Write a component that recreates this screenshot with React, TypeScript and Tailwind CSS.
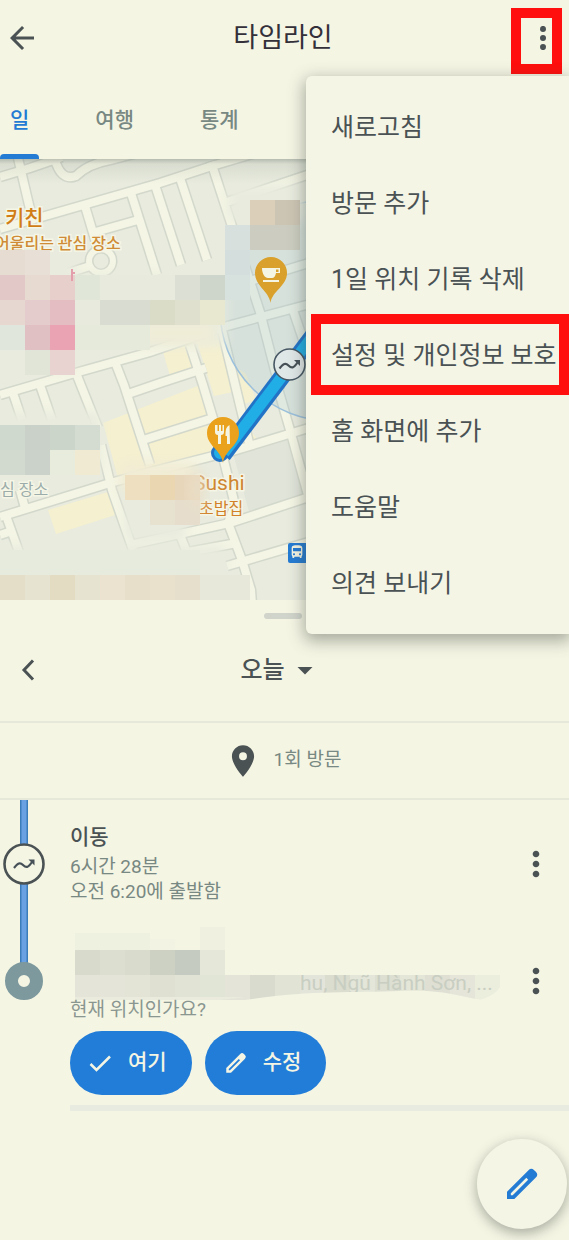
import { MdArrowBack, MdArrowDropDown, MdDirectionsBus, MdLocationOn, MdMoreVert } from "react-icons/md";

const tabs = ["일", "여행", "통계"];

const menuItems = [
  "새로고침",
  "방문 추가",
  "1일 위치 기록 삭제",
  "설정 및 개인정보 보호",
  "홈 화면에 추가",
  "도움말",
  "의견 보내기",
];

const roads = [
  "M0 229L160 183L212 166L306 138",
  "M0 177L30 168L62 157",
  "M18 158L33 222",
  "M54 156Q60 182 76 176Q88 164 110 160L165 146",
  "M130 190L157 275",
  "M92 233L138 220",
  "M85 206L97 246",
  "M90 266L68 273",
  "M0 395L75 373L150 352L220 328L257 318L310 304",
  "M76 373L98 428",
  "M115 362L124 385L150 465",
  "M13 393L22 420",
  "M40 385L52 420",
  "M128 394L160 383L206 368",
  "M143 440L213 418",
  "M0 517L110 483L150 472L233 451L312 427",
  "M101 445L112 490L133 550",
  "M5 513L19 552",
  "M0 535L12 531",
  "M20 490L25 508",
  "M190 345L203 385L215 425L235 505L228 523L242 560L251 590L252 604",
  "M222 330L250 447",
  "M277 385L290 430L308 495",
  "M130 545L230 523L312 496",
  "M188 552L237 543",
  "M227 566L312 541",
  "M155 185L181 265",
  "M180 178L207 260",
  "M211 162L260 312L280 390",
  "M227 202L310 174",
  "M227 288L312 262",
  "M293 310L310 360",
  "M180 535L190 560",
];

const yellowAreas = [
  "163,352 188,343 196,368 170,376",
  "197,342 217,335 233,392 214,396",
  "233,365 246,374 256,400 244,404",
  "103,423 200,385 215,420 250,430 262,445 215,457 118,478",
  "48,510 108,492 115,515 56,534",
];

// x, y, columns, colour
const mapMosaic: [number, number, number, string][] = [
  [0, 250, 1, "#e6dcd2"], [25, 250, 1, "#e8e0d6"],
  [0, 275, 1, "#e3c8c8"], [25, 275, 1, "#e7dad1"], [50, 275, 1, "#e7cfcc"], [75, 275, 1, "#e0e7d8"],
  [100, 275, 3, "#e7eadc"], [175, 275, 1, "#dce0d4"], [200, 275, 1, "#ced6cc"], [225, 275, 1, "#d7e1de"],
  [0, 300, 1, "#e6d8d0"], [25, 300, 1, "#e5cccc"], [50, 300, 1, "#e4bdc3"], [75, 300, 1, "#e7eadc"],
  [100, 300, 2, "#d8dcd1"], [150, 300, 1, "#dbdcc8"], [175, 300, 1, "#dfe0cd"], [200, 300, 1, "#e8e8d0"],
  [0, 325, 1, "#e1e6dc"], [25, 325, 1, "#e1c0c4"], [50, 325, 1, "#eaa3b3"], [75, 325, 3, "#e6eadb"],
  [25, 350, 1, "#e0e5d7"], [50, 350, 1, "#e8d3d0"],
  [250, 200, 1, "#dccfba"], [275, 200, 1, "#cdc5b4"],
  [225, 225, 1, "#d7e0dc"], [250, 225, 2, "#cccdc0"],
  [225, 250, 1, "#d3dedd"],
  [0, 425, 1, "#d0d9cd"], [25, 425, 1, "#c9d1c8"], [50, 425, 1, "#ccd5ca"], [75, 425, 1, "#d4dbd0"],
  [0, 450, 1, "#d2d9cf"], [25, 450, 1, "#cbd2ca"], [50, 450, 1, "#e8ecdc"], [75, 450, 1, "#f0ead2"],
  [125, 475, 1, "#eedfc0"], [150, 475, 1, "#ead6b0"], [175, 475, 1, "#e8d6ba"],
  [150, 500, 1, "#e6e2cf"], [175, 500, 1, "#e6ddcc"],
  [0, 550, 8, "#e7ebdd"],
  [0, 575, 1, "#e4ddc7"], [25, 575, 1, "#e6e3d0"], [50, 575, 1, "#e4dbc3"], [75, 575, 1, "#e6e3d1"],
  [100, 575, 1, "#ebe3d0"], [125, 575, 1, "#e8dfca"], [150, 575, 1, "#e9e1cb"], [175, 575, 1, "#e6dfcc"],
  [200, 575, 2, "#e7e8da"],
];

const nameMosaic: [number, number, number, string][] = [
  [5, 6, 3, "#eff1e0"], [130, 0, 1, "#eff0e0"], [80, 12, 1, "#f2f3e3"],
  [5, 23, 1, "#d8dbcc"], [30, 23, 1, "#dcdfcf"], [55, 23, 1, "#d9dccc"], [80, 23, 1, "#cdd1c4"],
  [105, 23, 1, "#c5cbc0"], [130, 23, 1, "#e5e8d9"],
  [5, 48, 2, "#e4e5d8"], [55, 48, 1, "#e3e3d6"], [80, 48, 1, "#dfe0d1"], [105, 48, 1, "#e1e3d4"],
  [130, 48, 1, "#e0e5d6"], [155, 48, 1, "#e4e5d8"], [180, 48, 1, "#d8dbce"], [205, 48, 1, "#e1e4d5"],
  [230, 48, 1, "#e4e5da"], [255, 48, 1, "#dbddcf"], [280, 48, 1, "#e3e6d8"], [305, 48, 1, "#dcdfd1"],
  [330, 48, 1, "#e4e6d7"], [355, 48, 1, "#dfe0d3"], [380, 48, 1, "#e5e5d9"], [405, 48, 1, "#ebeddd"],
];

const TravelArrow = () => (
  <>
    <path d="M-10 4C-6 -1 -4 -2 -1 1S4 4 8 -2" fill="none" stroke="#465057" strokeWidth="2.2" />
    <path d="M4.500 -4.500H10.500V1.500Z" fill="#465057" />
  </>
);

const Pencil = ({ className }: { className: string }) => (
  <svg viewBox="0 0 24 24" className={className} aria-hidden="true">
    <path
      fill="currentColor"
      fillRule="evenodd"
      d="M3 16.600V21h4.400L20.300 8.100a2.400 2.400 0 0 0 0-3.400l-1-1a2.400 2.400 0 0 0-3.400 0L3 16.600zM5.300 18.700v-1.100L14.600 8.300l1.100 1.100-9.300 9.300z"
    />
  </svg>
);

const MapView = () => (
  <svg
    viewBox="0 159 569 441"
    preserveAspectRatio="xMinYMin slice"
    className="block h-[441px] w-full bg-[#e8ebde]"
    role="img"
    aria-label="지도"
  >
    <defs>
      <filter id="soft" x="-20%" y="-40%" width="140%" height="180%">
        <feGaussianBlur stdDeviation="6" />
      </filter>
      <linearGradient id="topShade" x1="0" y1="0" x2="0" y2="1">
        <stop offset="0" stopColor="#6b756c" stopOpacity="0.4" />
        <stop offset="0.2" stopColor="#6b756c" stopOpacity="0.12" />
        <stop offset="1" stopColor="#6b756c" stopOpacity="0" />
      </linearGradient>
    </defs>
    <polygon points="233,453 286,438 306,495 250,515" fill="#e0e4d9" />
    {yellowAreas.map((points) => (
      <polygon key={points} points={points} fill="#f5f0cf" />
    ))}
    <g fill="none" stroke="#d3d8cc" strokeWidth="11">
      {roads.map((d) => (
        <path key={d} d={d} />
      ))}
      <circle cx="101" cy="261" r="12" strokeWidth="9" />
    </g>
    <g fill="none" stroke="#f4f5e4" strokeWidth="8">
      {roads.map((d) => (
        <path key={d} d={d} />
      ))}
      <circle cx="101" cy="261" r="12" strokeWidth="6" />
    </g>
    <circle cx="331" cy="310" r="111" fill="#9dbfd0" fillOpacity="0.22" stroke="#9cc0dc" strokeWidth="1.500" />

    <g fill="#e8ebde" filter="url(#soft)">
      <rect x="60" y="275" width="165" height="70" />
      <rect x="0" y="255" width="75" height="115" />
      <rect x="0" y="412" width="100" height="60" />
      <rect x="228" y="185" width="78" height="35" />
      <rect x="-10" y="546" width="235" height="60" />
      <rect x="125" y="480" width="60" height="60" />
    </g>
    <rect x="120" y="462" width="75" height="30" fill="#f1ecd4" filter="url(#soft)" />
    <rect x="140" y="322" width="75" height="22" fill="#f0edd7" filter="url(#soft)" />

    <g fontFamily='Roboto, "Noto Sans CJK KR", sans-serif' stroke="#f5f6e6" strokeWidth="3" paintOrder="stroke">
      <text x="5" y="225" fontSize="21" fontWeight="500" fill="#d17d16">키친</text>
      <text x="-5" y="249" fontSize="16" fontWeight="500" fill="#cf8b35">어울리는 관심 장소</text>
      <text x="0" y="495" fontSize="16" fill="#9bacaa">심 장소</text>
      <text x="193" y="490" fontSize="21" fill="#cf8630">Sushi</text>
      <text x="199" y="514" fontSize="16" fill="#d1812a">초밥집</text>
    </g>
    {mapMosaic.map(([x, y, columns, fill]) => (
      <rect key={`${x}-${y}`} x={x} y={y} width={columns * 25} height="25" fill={fill} />
    ))}
    <ellipse cx="197" cy="490" rx="9" ry="20" fill="#eadfc8" fillOpacity="0.8" filter="url(#soft)" />
    <path d="M72 269v12M72 273h3" stroke="#e3a0ac" strokeWidth="2" />

    <circle cx="220" cy="453" r="7.500" fill="#21aee6" stroke="#2273c6" strokeWidth="3" />
    <path d="M223 455L315 333" stroke="#2273c6" strokeWidth="17" />
    <path d="M224 453L315 333" stroke="#21aee6" strokeWidth="11" />
    <g transform="translate(289.500 364.500)">
      <circle r="15.500" fill="#e0e7e7" stroke="#465763" strokeWidth="1.600" />
      <TravelArrow />
    </g>

    <path d="M270.500 303C269 291 255 286 255 273a16 16 0 0 1 32 0c0 13-15 18-16.500 30z" fill="#d9a02b" />
    <path d="M262 268h18v5h-4c-.5 3-2 5-4 5h-4c-3 0-6-4-6-10zm14 1.500v2.500h2.500v-2.500zM263 280h16v2h-16z" fill="#f5f5e4" fillRule="evenodd" />
    <path d="M223 463C221.500 450 207 446 207 433a16 16 0 0 1 32 0c0 13-14.500 17-16 30z" fill="#eaa11c" />
    <path d="M215 425v7q0 3 3 3v9h3v-9q3 0 3-3v-7h-1.500v6h-1.500v-6h-2v6h-1.500v-6zM229.500 425q-4 2-4 8v3h1.500v8h3z" fill="#f5f5e4" />

    <rect x="288" y="543" width="20" height="20" rx="2" fill="#247bd3" />
    <MdDirectionsBus x="289" y="544" width="18" height="18" color="#f5f5e4" />
    <rect x="0" y="159" width="569" height="25" fill="url(#topShade)" />
  </svg>
);

const OverflowMenu = () => (
  <ul
    role="menu"
    className="absolute right-0 top-[76px] z-10 w-[263px] rounded-l-md bg-[#f5f5e6] pb-3 pt-[14px] shadow-[0_5px_16px_2px_rgba(60,70,60,0.42)]"
  >
    {menuItems.map((item) => (
      <li key={item} role="none" className="relative">
        <button
          type="button"
          role="menuitem"
          className="flex h-[76px] w-full items-center whitespace-nowrap pl-[25px] text-left text-[25px] leading-8"
        >
          {item}
        </button>
        {item === "설정 및 개인정보 보호" && (
          <span className="pointer-events-none absolute -top-1 left-[5px] right-0 h-[81px] border-[10px] border-[#ff0f0d]" />
        )}
      </li>
    ))}
  </ul>
);

const MoreButton = () => (
  <button type="button" aria-label="더보기" className="flex h-12 w-8 shrink-0 items-center justify-center">
    <MdMoreVert className="size-10 shrink-0" />
  </button>
);

const App = () => {
  return (
    <div className='relative min-h-screen overflow-hidden bg-[#f5f5e4] font-[Roboto,"Noto_Sans_CJK_KR",sans-serif] text-[#4a5254]'>
      <header>
        <div className="relative flex h-[76px] items-center justify-between pl-1 pr-[7px]">
          <button type="button" aria-label="뒤로" className="w-[51px]">
            <MdArrowBack className="size-9" />
          </button>
          <h1 className="text-[27px] leading-8 text-[#33303a]">타임라인</h1>
          <button
            type="button"
            aria-label="메뉴"
            className="mt-1.5 flex h-[66px] w-[51px] items-center justify-end border-[10px] border-[#ff0f0d]"
          >
            <svg viewBox="0 0 18 24" className="mb-1.5 h-6 w-[18px] shrink-0" fill="currentColor">
              <circle cx="9" cy="2.900" r="3" />
              <circle cx="9" cy="12" r="3" />
              <circle cx="9" cy="21.100" r="3" />
            </svg>
          </button>
        </div>
        <nav className="flex h-[83px] gap-[46px]">
          {tabs.map((tab, index) => (
            <a
              key={tab}
              href="#"
              className={
                index === 0
                  ? "relative flex items-center px-2.5 pt-1.5 text-[21px] font-medium text-[#247bd3]"
                  : "flex items-center px-2.5 pt-1.5 text-[21px] font-medium text-[#788882]"
              }
            >
              {tab}
              {index === 0 && <span className="absolute inset-x-0 bottom-0 h-[5px] rounded-t bg-[#247bd3]" />}
            </a>
          ))}
        </nav>
      </header>

      <OverflowMenu />
      <MapView />

      <main>
        <div className="flex h-5 items-end justify-center pb-px pr-1">
          <div className="h-1.5 w-[38px] rounded-full bg-[#d0d4cb]" />
        </div>
        <div className="relative flex h-[103px] items-center justify-center border-b-2 border-[#e6e8da] pb-0.5 pr-1.5">
          <button type="button" aria-label="이전 날짜" className="absolute left-4 p-1">
            <svg viewBox="0 0 16 24" className="h-6 w-4" fill="none" stroke="currentColor" strokeWidth="3">
              <path d="M13 2.500L4 12l9 9.500" />
            </svg>
          </button>
          <button type="button" className="flex items-center gap-0.5 text-2xl font-medium">
            오늘
            <MdArrowDropDown className="size-9" />
          </button>
        </div>
        <div className="flex h-[77px] items-center justify-center gap-3 border-b-2 border-[#e6e8da] pr-1">
          <MdLocationOn className="size-[38px]" />
          <p className="text-[19px] text-[#788882]">1회 방문</p>
        </div>

        <div className="flex">
          <svg viewBox="0 0 48 204" className="h-[204px] w-12 shrink-0" aria-hidden="true">
            <path d="M24 0V170" stroke="#3d7cbb" strokeWidth="8" />
            <path d="M24 0V170" stroke="#6aa1e2" strokeWidth="5" />
            <g transform="translate(24 64)">
              <circle r="19.500" fill="#f5f5e4" stroke="#4a5254" strokeWidth="2.600" />
              <TravelArrow />
            </g>
            <circle cx="24" cy="181" r="12.500" fill="#f5f5e4" stroke="#7d999d" strokeWidth="13" />
          </svg>
          <div className="min-w-0 flex-1 pl-[22px]">
            <div className="flex h-[127px] justify-between pr-[17px]">
              <div className="pt-[25px] text-[19px] leading-[25px] text-[#788882]">
                <h2 className="mb-1 text-[21px] font-medium text-[#4a5254]">이동</h2>
                <p>6시간 28분</p>
                <p>오전 6:20에 출발함</p>
              </div>
              <div className="pt-10">
                <MoreButton />
              </div>
            </div>
            <div className="flex justify-between pr-[17px]">
              <div>
                <svg viewBox="0 0 435 73" className="block h-[73px] w-[435px]" aria-hidden="true">
                  {nameMosaic.map(([x, y, columns, fill]) => (
                    <rect key={`${x}-${y}`} x={x} y={y} width={columns * 25} height="25" fill={fill} />
                  ))}
                  <text x="230" y="63" fontSize="21" fill="#c9cec2" fontFamily='Roboto, "Noto Sans", sans-serif'>
                    hu, Ngũ Hành Sơn, ...
                  </text>
                  <path d="M175 73C240 63 280 66 330 64S390 71 415 73Z" fill="#f5f5e4" />
                  <path d="M5 73V70H175L150 73Z" fill="#eaebdc" />
                  <path d="M410 73Q426 68 430 60V73Z" fill="#f5f5e4" />
                </svg>
                <p className="-mt-[3px] text-[19px] leading-[25px] text-[#8a9790]">현재 위치인가요?</p>
              </div>
              <div className="pt-[30px]">
                <MoreButton />
              </div>
            </div>
            <div className="mt-[9px] flex gap-[13px] text-[21px] font-medium text-[#f5f5e4]">
              <button type="button" className="flex h-16 items-center gap-4 rounded-full bg-[#217dd8] pl-[18px] pr-[25px]">
                <svg viewBox="0 0 24 24" className="size-6" fill="none" stroke="currentColor" strokeWidth="2.500" aria-hidden="true">
                  <path d="M2.500 13l6 6L22 5.500" />
                </svg>
                여기
              </button>
              <button type="button" className="flex h-16 items-center gap-3.5 rounded-full bg-[#217dd8] pl-[18px] pr-[25px]">
                <Pencil className="size-[26px]" />
                수정
              </button>
            </div>
            <div className="mt-[10px] h-1.5 bg-[#e8ebdf]" />
          </div>
        </div>
      </main>

      <button
        type="button"
        aria-label="수정하기"
        className="absolute bottom-[11px] right-0.5 flex size-[90px] items-center justify-center rounded-full bg-[#f5f5e6] text-[#247bd3] shadow-[0_4px_12px_1px_rgba(60,70,60,0.38)]"
      >
        <Pencil className="size-10" />
      </button>
    </div>
  );
};

export default App;
